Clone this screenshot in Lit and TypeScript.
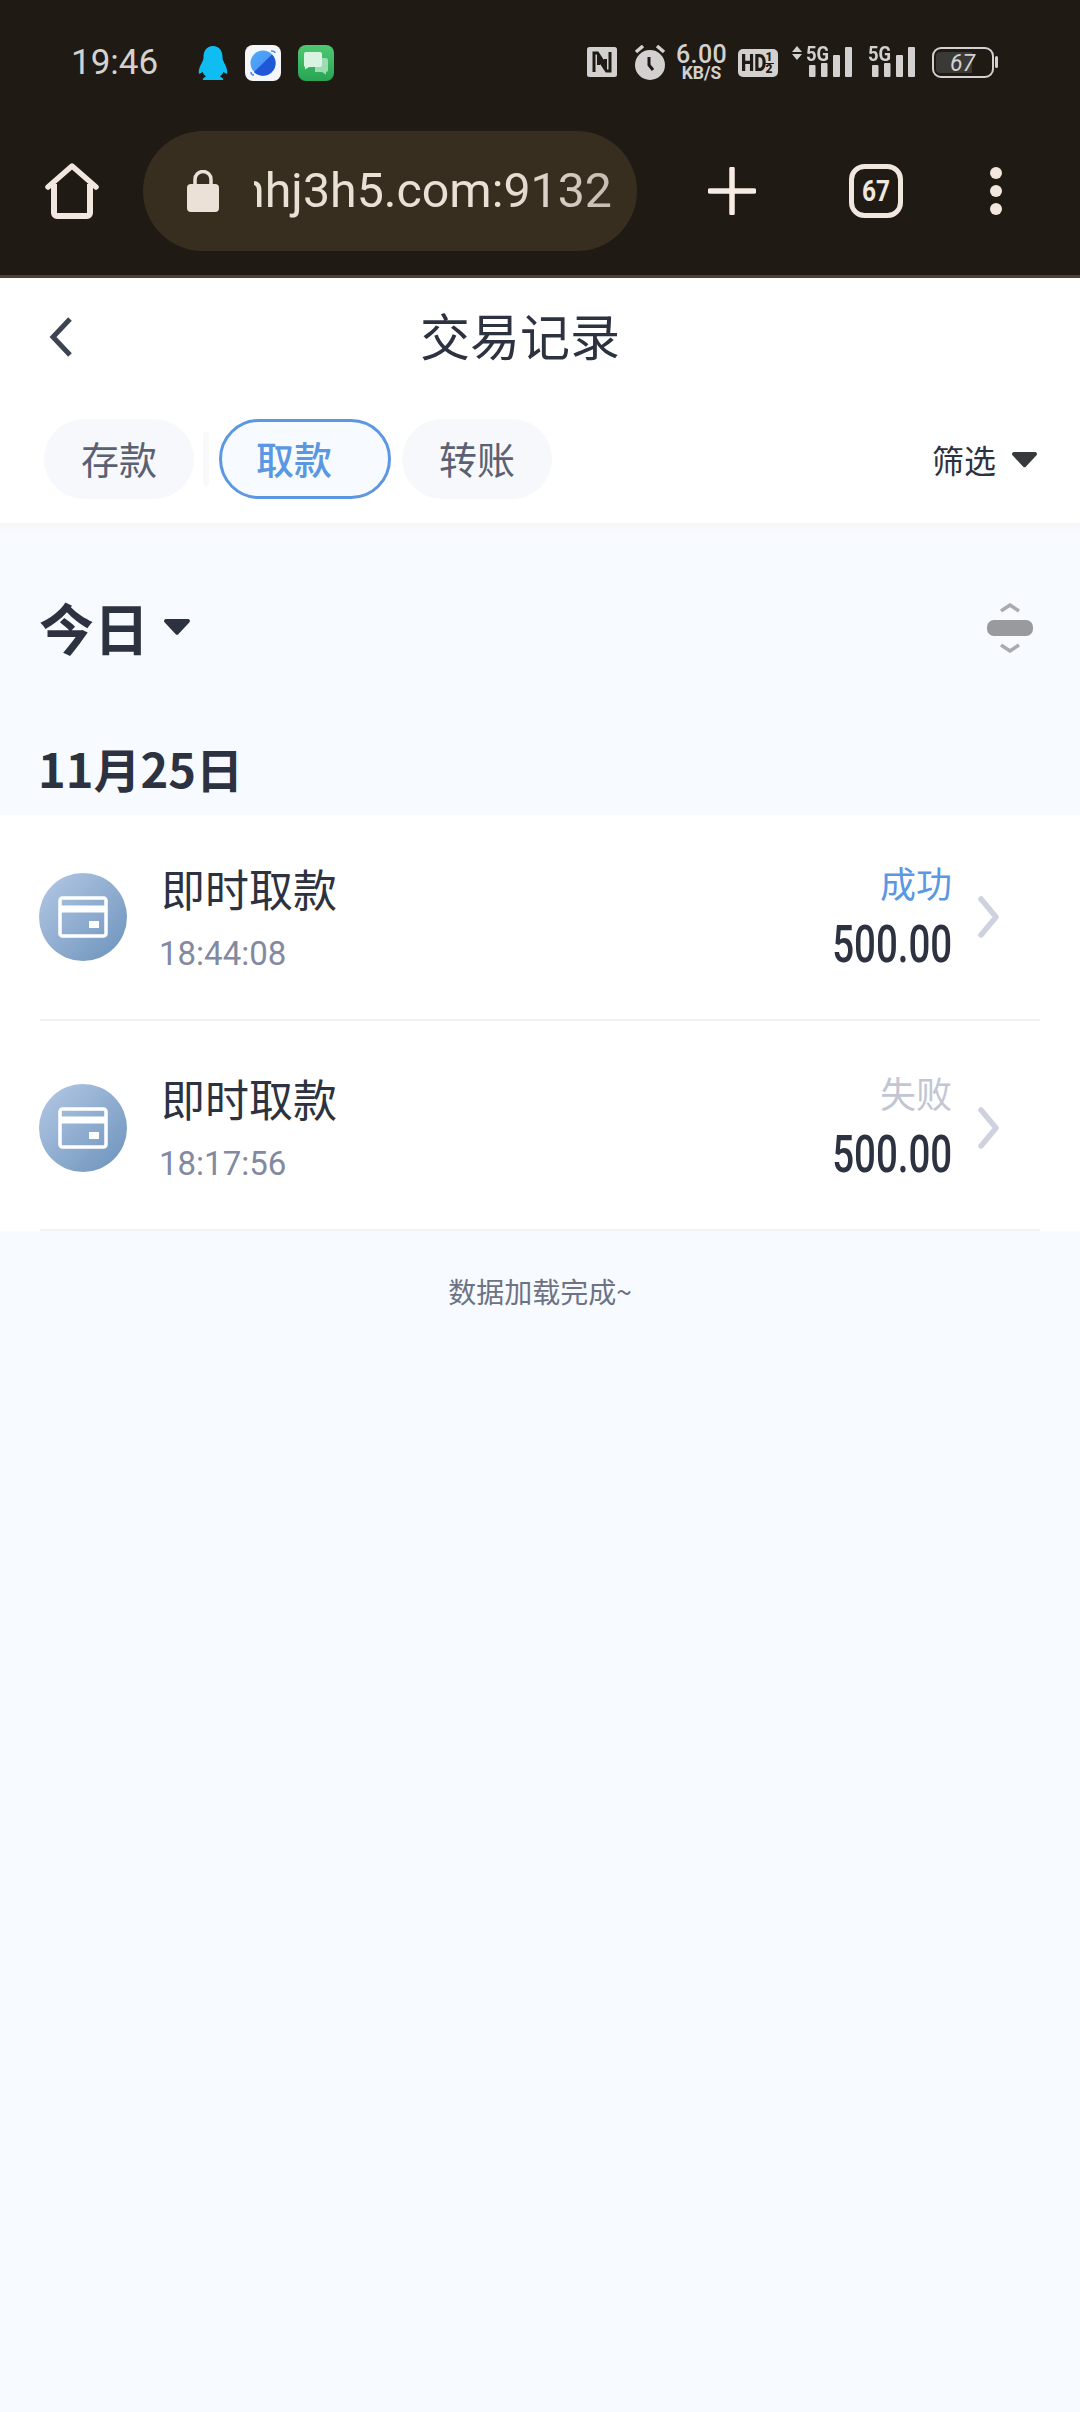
import { LitElement, html, css, svg } from "lit";
import { customElement } from "lit/decorators.js";

@customElement("app-root")
export class AppRoot extends LitElement {
  static styles = css`
    :host { display: block; width: 1080px; min-height: 2412px; background: #f7faff; font-family: "Noto Sans CJK SC", "Noto Sans", sans-serif; color: #2d3240; overflow: hidden; }
    svg { display: block; flex: none; }
    .chrome { background: #1f1a14; border-bottom: 3px solid #4a4335; height: 275px; }
    .status { height: 131px; display: flex; align-items: flex-start; padding: 45px 82px 0 71px; box-sizing: border-box; }
    .time { font: 400 35px/36px Roboto, sans-serif; color: #d4d2cf; margin-right: 41px; width: 86px; white-space: nowrap; }
    .notif { display: flex; gap: 17px; }
    .sys { margin-left: auto; display: flex; align-items: flex-start; color: #d2d1cf; font-family: Roboto, sans-serif; }
    .nfc { margin-top: 2px; }
    .alarm { margin-left: 17px; }
    .speed { margin-left: 10px; width: 51px; text-align: center; white-space: nowrap; }
    .speed .v { font-size: 25px; font-weight: 500; line-height: 19px; letter-spacing: 0.4px; }
    .speed .u { font-size: 17.5px; font-weight: 700; line-height: 15px; margin-top: 2px; }
    .hd { margin: 4px 0 0 11px; width: 40px; height: 28px; border-radius: 5px; background: #d2d1cf; color: #1f1a14; display: flex; align-items: center; box-sizing: border-box; padding-left: 3px; font-weight: 900; }
    .hd .t { font-size: 24px; line-height: 28px; width: 23px; transform: scaleX(0.78); transform-origin: left center; white-space: nowrap; }
    .hd .f { font-size: 12px; line-height: 11px; display: flex; flex-direction: column; align-items: center; width: 10px; }
    .hd .f i { font-style: normal; }
    .hd .f i:first-child { border-bottom: 1.5px solid #1f1a14; width: 9px; text-align: center; }
    .sig { position: relative; margin-top: 1px; }
    .sig.a { margin-left: 14px; }
    .sig.b { margin-left: 16px; }
    .g5 { position: absolute; top: -2px; font-size: 20px; font-weight: 700; line-height: 20px; white-space: nowrap; transform: scaleX(0.92); transform-origin: left center; }
    .sig.a .g5 { left: 14px; }
    .sig.b .g5 { left: 0; }
    .bat { position: relative; margin: 2px 0 0 17px; }
    .bat span { position: absolute; left: 18px; top: 4px; font-size: 23px; line-height: 26px; font-style: italic; }

    .toolbar { display: flex; align-items: center; height: 120px; padding: 0 84px 0 45px; }
    .pill { width: 494px; height: 120px; border-radius: 60px; background: #382e20; margin-left: 44px; display: flex; align-items: center; box-sizing: border-box; padding-left: 44px; flex: none; }
    .url { margin-left: 35px; width: 358px; overflow: hidden; font: 400 48.3px/60px Roboto, sans-serif; color: #e9e0d6; white-space: nowrap; direction: rtl; text-align: left; mask-image: linear-gradient(90deg, #000 70%, rgba(0,0,0,.8) 100%); }
    .url span { unicode-bidi: bidi-override; direction: ltr; }
    .plus { margin-left: 71px; }
    .tabcount { margin-left: 93px; }
    .dots { margin-left: 87px; }

    .white { background: #fff; height: 245px; }
    .head { height: 118px; display: flex; align-items: center; padding-left: 48px; }
    .title { margin: -6px 0 0 346px; font-size: 50px; line-height: 70px; color: #2d3240; white-space: nowrap; }
    .tabs { display: flex; align-items: center; padding: 23px 42px 0 44px; }
    .tab { height: 80px; border-radius: 40px; background: #f7f8fb; padding: 0 37px; box-sizing: border-box; font-size: 38px; line-height: 78px; color: #5a6172; white-space: nowrap; }
    .tab.on { background: #f7fbff; border: 3px solid #5c97e2; color: #5c97e2; font-weight: 500; padding: 0 56px 0 34px; line-height: 72px; }
    .sep { width: 6px; height: 54px; border-radius: 3px; background: #f8f9fb; margin: 0 10px 0 9px; }
    .gap { width: 11px; }
    .filter { margin-left: auto; display: flex; align-items: center; gap: 15px; font-size: 32px; line-height: 44px; color: #2d3240; }

    .fade { height: 12px; background: linear-gradient(#f6f7f9, #f7faff); }
    .range { display: flex; align-items: center; height: 186px; padding: 0 47px 5px 39px; box-sizing: border-box; }
    .today { font-size: 55px; font-weight: 700; line-height: 70px; color: #2d3240; }
    .range .caret { margin-left: 14px; margin-top: 3px; }
    .range .sort { margin-left: auto; margin-top: 5px; }
    .date { font-size: 47px; font-weight: 700; line-height: 64px; height: 94px; padding: 15px 0 0 38px; box-sizing: border-box; color: #2d3240; white-space: nowrap; }

    .list { background: #fff; }
    .row { height: 203px; padding-top: 5px; margin: 0 40px; border-bottom: 2px solid #f1f2f5; display: flex; align-items: center; box-sizing: content-box; }
    .row:first-child { height: 204px; padding-top: 0; }
    .ico { width: 88px; height: 88px; border-radius: 50%; background: linear-gradient(135deg, #b5c9e5, #6b92bb); display: flex; align-items: center; justify-content: center; margin-left: -1px; flex: none; }
    .info { margin: -4px 0 0 34px; }
    .name { font-size: 44px; line-height: 62px; color: #2d3240; white-space: nowrap; }
    .when { font: 400 33px/40px Roboto, sans-serif; color: #8289a1; margin-top: 15px; margin-left: -2px; white-space: nowrap; }
    .right { margin-left: auto; display: flex; flex-direction: column; align-items: flex-end; padding-bottom: 5px; }
    .state { font-size: 36px; line-height: 50px; }
    .state.ok { color: #5c97e2; }
    .state.bad { color: #c2c6d3; }
    .amt { font: 500 52px/56px Roboto, sans-serif; color: #2d3240; transform: scaleX(0.74); transform-origin: right center; white-space: nowrap; margin-top: 10px; }
    .chev { margin: 0 39px 0 25px; }

    .done { text-align: center; font-size: 28px; line-height: 40px; color: #6d7284; padding-top: 40px; }
  `;

  private bars() {
    return svg`
      <rect x="0" y="19" width="6.5" height="12" rx="1" fill="#d2d1cf"/>
      <rect x="12" y="17" width="6.5" height="14" rx="1" fill="#d2d1cf"/>
      <rect x="24" y="9" width="7" height="22" rx="1" fill="#d2d1cf"/>
      <rect x="36" y="1" width="7" height="30" rx="1" fill="#d2d1cf"/>`;
  }

  private card() {
    return html`<svg width="50" height="42" viewBox="0 0 50 42">
      <rect x="2" y="2" width="46" height="38" rx="2.500" fill="none" stroke="#fff" stroke-width="3.500"/>
      <rect x="3" y="9.500" width="44" height="7" fill="#fff"/>
      <rect x="31" y="25" width="10" height="7" fill="#fff"/>
    </svg>`;
  }

  private rightChev() {
    return html`<svg class="chev" width="24" height="42" viewBox="0 0 24 42">
      <path d="M4 3l15 18L4 39" fill="none" stroke="#cdd2de" stroke-width="5.500" stroke-linecap="round" stroke-linejoin="round"/>
    </svg>`;
  }

  private row(time: string, state: string, cls: string) {
    return html`<div class="row">
      <div class="ico">${this.card()}</div>
      <div class="info">
        <div class="name">即时取款</div>
        <div class="when">${time}</div>
      </div>
      <div class="right">
        <div class="state ${cls}">${state}</div>
        <div class="amt">500.00</div>
      </div>
      ${this.rightChev()}
    </div>`;
  }

  render() {
    return html`
      <div class="chrome">
        <div class="status">
          <div class="time">19:46</div>
          <div class="notif">
            <svg width="30" height="36" viewBox="0 0 30 36">
              <path d="M15 1C8.500 1 5.500 6 5.500 12c0 2.500-.5 3.500-1.800 6C2 21 .2 25.500.8 28.500c.6 1 2.700-.7 3.700-1.700 .8 2 2 3.500 3.500 5-2 .8-3.200 1.400-3.200 2.700 0 .7 1 .5 2 .5h16.400c1 0 2 .2 2-.5 0-1.300-1.200-1.900-3.200-2.700 1.500-1.500 2.700-3 3.500-5 1 1 3.100 2.700 3.700 1.700 .6-3-1.200-7.500-2.900-10.500-1.300-2.500-1.800-3.500-1.800-6C24.500 6 21.500 1 15 1z" fill="#10bdf2"/>
            </svg>
            <svg width="36" height="36" viewBox="0 0 36 36">
              <defs>
                <linearGradient id="pl" x1="0" y1="0" x2="1" y2="1"><stop offset="0" stop-color="#56a9fb"/><stop offset="1" stop-color="#3c8df3"/></linearGradient>
              </defs>
              <rect width="36" height="36" rx="8" fill="#f4f6f9"/>
              <circle cx="18" cy="18" r="12.500" fill="url(#pl)"/>
              <path d="M27 9.500A12.500 12.500 0 0 1 9 27z" fill="#1f57d6"/>
              <path d="M26 6c3 0 4 .6 4 2M6 27c0 2 1 3 3 3" stroke="#3c8df3" stroke-width="1.500" fill="none"/>
            </svg>
            <svg width="36" height="36" viewBox="0 0 36 36">
              <defs>
                <linearGradient id="gr" x1="0" y1="0" x2="0" y2="1"><stop offset="0" stop-color="#4fc873"/><stop offset="1" stop-color="#27a552"/></linearGradient>
              </defs>
              <rect width="36" height="36" rx="8" fill="url(#gr)"/>
              <path d="M17 13h11a2 2 0 0 1 2 2v10a2 2 0 0 1-2 2v2.500l-4-2.500h-7z" fill="#9ddcb2"/>
              <path d="M8 7h14a2 2 0 0 1 2 2v11a2 2 0 0 1-2 2H11l-4 2.500V22a2 2 0 0 1-1-2V9a2 2 0 0 1 2-2z" fill="#d9f2e1"/>
            </svg>
          </div>
          <div class="sys">
            <svg class="nfc" width="30" height="30" viewBox="0 0 30 30">
              <rect width="30" height="30" rx="2.500" fill="#d2d1cf"/>
              <path d="M7 25V6h3.500l8 12v-6" fill="none" stroke="#1f1a14" stroke-width="3"/>
              <path d="M23 5v19h-3.500l-8-12v6" fill="none" stroke="#1f1a14" stroke-width="3"/>
            </svg>
            <svg class="alarm" width="32" height="36" viewBox="0 0 32 36">
              <circle cx="16" cy="20" r="15" fill="#d2d1cf"/>
              <path d="M15 12v8l4 5" fill="none" stroke="#1f1a14" stroke-width="3"/>
              <path d="M2 7l7-6M30 7l-7-6" stroke="#d2d1cf" stroke-width="3.500" fill="none"/>
            </svg>
            <div class="speed"><div class="v">6.00</div><div class="u">KB/S</div></div>
            <div class="hd"><span class="t">HD</span><span class="f"><i>1</i><i>2</i></span></div>
            <div class="sig a">
              <svg width="60" height="32" viewBox="0 0 60 32">
                <path d="M5 0l5 6H0zM5 14l5-6H0z" fill="#d2d1cf"/>
                <g transform="translate(17 0)">${this.bars()}</g>
              </svg>
              <span class="g5">5G</span>
            </div>
            <div class="sig b">
              <svg width="47" height="32" viewBox="0 0 47 32"><g transform="translate(4 0)">${this.bars()}</g></svg>
              <span class="g5">5G</span>
            </div>
            <div class="bat">
              <svg width="66" height="31" viewBox="0 0 66 31">
                <rect x="1" y="1" width="60" height="29" rx="8" fill="none" stroke="#d2d1cf" stroke-width="2"/>
                <path d="M4 9a4 4 0 0 1 4-4h32v21H8a4 4 0 0 1-4-4z" fill="#3a3936"/>
                <rect x="63" y="9" width="3" height="12" rx="1.500" fill="#d2d1cf"/>
              </svg>
              <span>67</span>
            </div>
          </div>
        </div>
        <div class="toolbar">
          <svg width="54" height="56" viewBox="0 0 54 56">
            <path d="M3 24L27 3l24 21" fill="none" stroke="#f1e7de" stroke-width="5.500" stroke-linecap="round" stroke-linejoin="round"/>
            <path d="M9 21v29a3 3 0 0 0 3 3h30a3 3 0 0 0 3-3V21" fill="none" stroke="#f1e7de" stroke-width="6" stroke-linejoin="round"/>
          </svg>
          <div class="pill">
            <svg width="32" height="42" viewBox="0 0 32 42">
              <path d="M8 17V9.500a8 8 0 0 1 16 0V17" fill="none" stroke="#ece1d7" stroke-width="3.500"/>
              <rect x="0" y="14" width="32" height="28" rx="4" fill="#ece1d7"/>
            </svg>
            <div class="url"><span>nhj3h5.com:9132</span></div>
          </div>
          <svg class="plus" width="48" height="48" viewBox="0 0 48 48">
            <path d="M24 2v44M2 24h44" stroke="#f6ece3" stroke-width="5.500" stroke-linecap="round"/>
          </svg>
          <svg class="tabcount" width="54" height="54" viewBox="0 0 54 54">
            <rect x="2.500" y="2.500" width="49" height="49" rx="13" fill="none" stroke="#f1e7de" stroke-width="5"/>
            <text x="13" y="37" font-family="Roboto, sans-serif" font-weight="700" font-size="29" fill="#f1e7de" textLength="28" lengthAdjust="spacingAndGlyphs">67</text>
          </svg>
          <svg class="dots" width="12" height="48" viewBox="0 0 12 48">
            <circle cx="6" cy="6" r="6" fill="#f1e7de"/><circle cx="6" cy="24" r="6" fill="#f1e7de"/><circle cx="6" cy="42" r="6" fill="#f1e7de"/>
          </svg>
        </div>
      </div>
      <div class="white">
        <div class="head">
          <svg width="26" height="42" viewBox="0 0 26 42">
            <path d="M22 3L5 21l17 18" fill="none" stroke="#3d4350" stroke-width="5"/>
          </svg>
          <div class="title">交易记录</div>
        </div>
        <div class="tabs">
          <div class="tab">存款</div>
          <div class="sep"></div>
          <div class="tab on">取款</div>
          <div class="gap"></div>
          <div class="tab">转账</div>
          <div class="filter">筛选
            <svg width="27" height="17" viewBox="0 0 27 17"><path d="M3 1h21a2 2 0 0 1 1.500 3.300L15 15.500a2 2 0 0 1-3 0L1.500 4.300A2 2 0 0 1 3 1z" fill="#38393c"/></svg>
          </div>
        </div>
      </div>
      <div class="fade"></div>
      <div class="range">
        <div class="today">今日</div>
        <svg class="caret" width="28" height="18" viewBox="0 0 28 18"><path d="M3 1h22a2 2 0 0 1 1.500 3.300L15.500 16a2 2 0 0 1-3 0L1.500 4.300A2 2 0 0 1 3 1z" fill="#2d3240"/></svg>
        <svg class="sort" width="46" height="50" viewBox="0 0 46 50">
          <path d="M14 8l9-6 9 6M14 42l9 6 9-6" fill="none" stroke="#ababad" stroke-width="3.500"/>
          <rect y="17" width="46" height="16" rx="7" fill="#999a9d"/>
        </svg>
      </div>
      <div class="date">11月25日</div>
      <div class="list">
        ${this.row("18:44:08", "成功", "ok")}
        ${this.row("18:17:56", "失败", "bad")}
      </div>
      <div class="done">数据加载完成~</div>
    `;
  }
}
